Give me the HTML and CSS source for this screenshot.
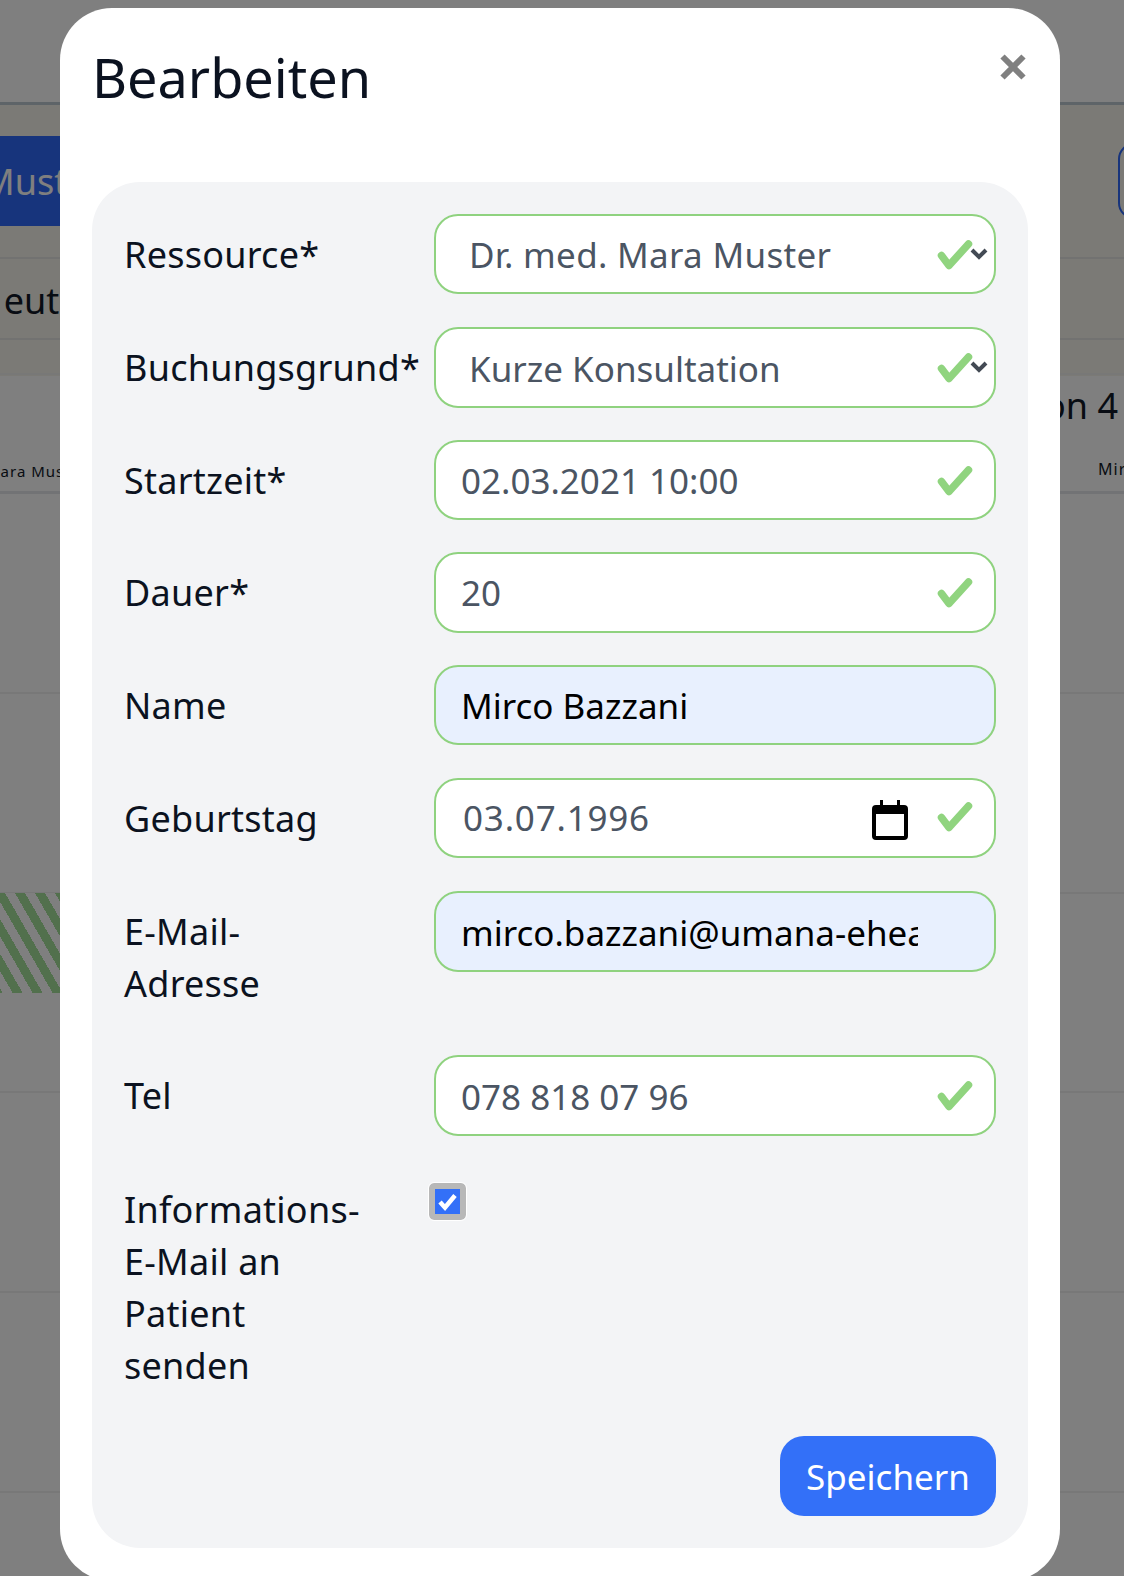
FILE: index.html
```html
<!DOCTYPE html>
<html lang="de">
<head>
<meta charset="utf-8">
<title>Bearbeiten</title>
<link rel="stylesheet" href="styles.css">
</head>
<body>
<div class="page">
  <div class="topbar"></div>
  <div class="band">
    <div class="tools">
      <div class="tab"><span class="tab-text">Muster</span></div>
      <div class="outline"></div>
    </div>
    <div class="today"><span class="today-text">Heute</span></div>
    <div class="gap-strip"></div>
  </div>
  <div class="cols">
    <div class="cols-left"><span class="res-left">Mara Muster</span></div>
    <div class="cols-right">
      <span class="room">Station 4</span>
      <span class="res-right">Mirco</span>
    </div>
  </div>
  <div class="slot"></div>
  <div class="slot"></div>
  <div class="slot"><div class="stripes"></div></div>
  <div class="slot"></div>
  <div class="slot"></div>
</div>

<div class="overlay"></div>

<div class="modal">
  <div class="modal-head">
    <h1 class="modal-title">Bearbeiten</h1>
    <svg class="close" viewBox="0 0 26 26" width="26" height="26"><path d="M2.5 2.5 23.5 23.5M23.5 2.5 2.5 23.5" fill="none" stroke="#808080" stroke-width="6"/></svg>
  </div>
  <form class="panel">
    <div class="row">
      <div class="label">Ressource*</div>
      <div class="field select mid wide"><span class="value">Dr. med. Mara Muster</span>
        <svg class="check" viewBox="0 0 36 30" width="36" height="30"><path d="M4.5 15.5 12 25.5 31.5 4" fill="none" stroke="#90d47f" stroke-width="7.5" stroke-linecap="round" stroke-linejoin="round"/></svg>
        <svg class="chev" viewBox="0 0 18 12" width="18" height="12"><path d="M2 2 9 9 16 2" fill="none" stroke="#434a54" stroke-width="4"/></svg>
      </div>
    </div>
    <div class="row">
      <div class="label">Buchungsgrund*</div>
      <div class="field select tall low"><span class="value">Kurze Konsultation</span>
        <svg class="check" viewBox="0 0 36 30" width="36" height="30"><path d="M4.5 15.5 12 25.5 31.5 4" fill="none" stroke="#90d47f" stroke-width="7.5" stroke-linecap="round" stroke-linejoin="round"/></svg>
        <svg class="chev" viewBox="0 0 18 12" width="18" height="12"><path d="M2 2 9 9 16 2" fill="none" stroke="#434a54" stroke-width="4"/></svg>
      </div>
    </div>
    <div class="row">
      <div class="label">Startzeit*</div>
      <div class="field text mid"><span class="value">02.03.2021 10:00</span>
        <svg class="check" viewBox="0 0 36 30" width="36" height="30"><path d="M4.5 15.5 12 25.5 31.5 4" fill="none" stroke="#90d47f" stroke-width="7.5" stroke-linecap="round" stroke-linejoin="round"/></svg>
      </div>
    </div>
    <div class="row">
      <div class="label">Dauer*</div>
      <div class="field text tall"><span class="value">20</span>
        <svg class="check" viewBox="0 0 36 30" width="36" height="30"><path d="M4.5 15.5 12 25.5 31.5 4" fill="none" stroke="#90d47f" stroke-width="7.5" stroke-linecap="round" stroke-linejoin="round"/></svg>
      </div>
    </div>
    <div class="row">
      <div class="label">Name</div>
      <div class="field text filled"><span class="value">Mirco Bazzani</span></div>
    </div>
    <div class="row">
      <div class="label">Geburtstag</div>
      <div class="field date"><span class="value">03.07.1996</span>
        <svg class="cal" viewBox="0 0 36 40" width="36" height="40"><path d="M8 0h3v5h14V0h3v5h4a4 4 0 0 1 4 4v27a4 4 0 0 1-4 4H4a4 4 0 0 1-4-4V9a4 4 0 0 1 4-4h4zM4 14v22h28V14z" fill="#000"/></svg>
        <svg class="check check-date" viewBox="0 0 36 30" width="36" height="30"><path d="M4.5 15.5 12 25.5 31.5 4" fill="none" stroke="#90d47f" stroke-width="7.5" stroke-linecap="round" stroke-linejoin="round"/></svg>
      </div>
    </div>
    <div class="row">
      <div class="label">E-Mail-<br>Adresse</div>
      <div class="field text filled tall low"><span class="value clip">mirco.bazzani@umana-ehealth.ch</span></div>
    </div>
    <div class="row">
      <div class="label">Tel</div>
      <div class="field text tall low"><span class="value">078 818 07 96</span>
        <svg class="check" viewBox="0 0 36 30" width="36" height="30"><path d="M4.5 15.5 12 25.5 31.5 4" fill="none" stroke="#90d47f" stroke-width="7.5" stroke-linecap="round" stroke-linejoin="round"/></svg>
      </div>
    </div>
    <div class="row">
      <div class="label label-low">Informations-<br>E-Mail an<br>Patient<br>senden</div>
      <div class="checkbox">
        <svg viewBox="0 0 25 25" width="25" height="25"><path d="M5 13 10 18.5 20 6.5" fill="none" stroke="#fff" stroke-width="4.5"/></svg>
      </div>
    </div>
    <div class="actions"><div class="save">Speichern</div></div>
  </form>
</div>
</body>
</html>
```
FILE: styles.css
```css
* { box-sizing: border-box; }
html, body { margin: 0; padding: 0; height: 1576px; overflow: hidden; }
body { font-family: "Noto Sans", "Open Sans", sans-serif; color: #111827; background: #fff; position: relative; }

/* page behind the dialog */
.page { width: 1124px; height: 1576px; overflow: hidden; background: #fff; }
.topbar { height: 105px; background: #fff; border-bottom: 3px solid #bcc8d0; }
.band { height: 271px; background: #f6f4ec; }
.tools { height: 154px; padding-top: 31px; display: flex; justify-content: space-between; border-bottom: 2px solid #e5e5e2; }
.tab { width: 60px; height: 90px; background: #2e68f8; overflow: hidden; white-space: nowrap; display: flex; align-items: center; }
.tab-text { margin-left: -18px; color: #fff; font-size: 36px; }
.outline { width: 40px; height: 76px; margin-top: 7px; margin-right: -34px; border: 2px solid #2e68f8; border-radius: 16px; }
.today { height: 81px; padding-top: 4px; border-bottom: 2px solid #e5e5e2; overflow: hidden; white-space: nowrap; display: flex; align-items: center; }
.today-text { margin-left: -23px; font-size: 36px; color: #111827; clip-path: inset(0 0 0 26px); }
.gap-strip { height: 35px; border-bottom: 2px solid #f0f0ee; }
.cols { height: 118px; display: flex; justify-content: space-between; border-bottom: 3px solid #e5e7eb; background: #fff; overflow: hidden; white-space: nowrap; }
.cols-left { width: 60px; overflow: hidden; padding-top: 84px; }
.res-left { margin-left: -14px; font-size: 15px; letter-spacing: 1px; }
.cols-right { width: 68px; padding-top: 5px; display: flex; flex-direction: column; overflow: hidden; }
.room { font-size: 36px; margin-left: -80px; align-self: flex-end; margin-right: 6px; line-height: 50px; }
.res-right { font-size: 16px; letter-spacing: 1px; margin-left: 42px; margin-top: 27px; }
.slot { height: 200px; border-bottom: 2px solid #f0f0f0; }
.stripes { width: 60px; height: 100px; margin-top: -1px; background: repeating-linear-gradient(60deg, #a4e09a 0 2.35px, #fff 2.35px 11px, #a4e09a 11px 17.32px); }

/* dim layer */
.overlay { position: absolute; inset: 0; background: rgba(0, 0, 0, 0.5); }

/* dialog */
.modal { position: absolute; left: 60px; top: 8px; width: 1000px; height: 1573px; background: #fff; border-radius: 52px; padding: 0 32px; }
.modal-head { height: 174px; display: flex; justify-content: space-between; align-items: flex-start; }
.modal-title { margin: 0; padding-top: 29px; font-size: 54px; line-height: 80px; font-weight: 400; color: #0b1220; }
.close { margin-top: 46px; margin-right: 2px; }
.panel { background: #f3f4f6; border-radius: 48px; padding: 32px; display: flex; flex-direction: column; gap: 32.8px; }
.row { display: grid; grid-template-columns: 310px 562px; align-items: start; }
.label { padding: 15px 0 12px; font-size: 36px; line-height: 52px; letter-spacing: 0.25px; color: #0b1220; }
.label-low { padding: 17px 0 10px; }
.field { height: 80px; background: #fff; border: 2px solid #8fd27f; border-radius: 24px; display: flex; align-items: center; position: relative; font-size: 35px; color: #4b5563; white-space: nowrap; }
.tall { height: 81px; margin-bottom: -1px; }
.mid { padding-top: 1px; }
.low { padding-top: 3px; }
.wide { letter-spacing: 0.3px; }
.text { padding-left: 25px; }
.select { padding-left: 33px; }
.date { padding-left: 27px; letter-spacing: 0.8px; }
.filled { background: #e8f0fe; color: #000; }
.clip { display: block; width: 457px; overflow: hidden; }
.check { position: absolute; top: 24px; right: 21px; }
.check-date { top: 22px; }
.chev { position: absolute; right: 6px; top: 32px; }
.cal { position: absolute; top: 20px; right: 86px; }
.checkbox { width: 37px; height: 37px; margin: 15.5px 0 0 -5px; background: #3370f8; border: 6px solid #b8b8b8; outline: 1.5px solid #fff; border-radius: 5px; display: flex; }
.actions { display: flex; justify-content: flex-end; margin-top: 1px; }
.save { width: 216px; height: 80px; border-radius: 24px; background: #3370f8; color: #fff; font-size: 35px; display: flex; align-items: center; justify-content: center; }
```
